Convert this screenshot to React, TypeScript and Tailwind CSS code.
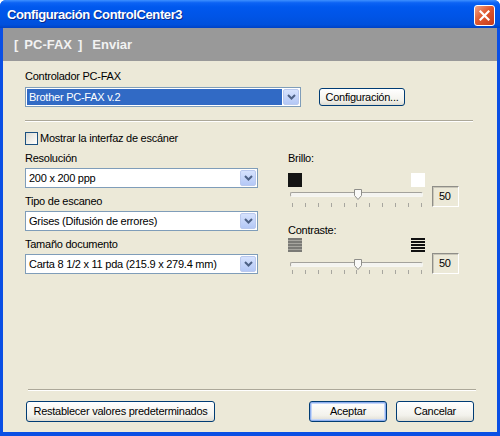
import { type ReactNode } from "react";

const font = "font-['Liberation_Sans',Arial,sans-serif]";

function Chevron() {
  return (
    <svg width="9" height="6" viewBox="0 0 9 6" className="block">
      <path d="M1 1 L4.5 4.5 L8 1" fill="none" stroke="#4D6185" strokeWidth="2" />
    </svg>
  );
}

interface ComboProps {
  value: string;
  className: string;
  selected?: boolean;
}

function Combo({ value, className, selected }: ComboProps) {
  return (
    <div className={`flex h-[20px] items-center border border-[#7F9DB9] bg-white ${className}`}>
      <div className="h-full flex-1 p-[1px]">
        <div
          className={
            selected
              ? "flex h-full items-center bg-[#316AC5] pl-[2px] text-white"
              : "flex h-full items-center pl-[2px] text-black"
          }
        >
          {value}
        </div>
      </div>
      <div className="mr-[1px] flex h-[16px] w-[16px] items-center justify-center rounded-[2px] border border-[#BAC9EE] bg-[linear-gradient(to_bottom,#D6E2FD,#B4C8F6)]">
        <Chevron />
      </div>
    </div>
  );
}

function XpButton({ children, className, isDefault }: { children: ReactNode; className: string; isDefault?: boolean }) {
  return (
    <div
      className={`flex items-center justify-center rounded-[3px] border border-[#003C74] bg-[linear-gradient(to_bottom,#FFFFFF,#F3F2EC_70%,#DEDCD2)] text-black ${
        isDefault ? "shadow-[inset_0_0_0_1px_#8EAEEE,inset_0_0_0_2px_#C4D6F8]" : ""
      } ${className}`}
    >
      {children}
    </div>
  );
}

function Slider({ trackTop, height, thumbTop }: { trackTop: string; height: string; thumbTop: string }) {
  const ticks = Array.from({ length: 11 }, (_, i) => i);
  return (
    <div className={`relative w-[137px] ${height}`}>
      <div
        className={`mx-[2px] h-[5px] rounded-[2px] border border-t-[#A3A29C] border-l-[#A3A29C] border-b-[#F6F6F2] border-r-[#F6F6F2] bg-[#F4F4F0] ${trackTop}`}
      />
      <svg width="8" height="11" viewBox="0 0 8 11" className={`absolute left-[66px] ${thumbTop}`}>
        <path d="M0.5 0.5 H7.5 V6.5 L4 10.5 L0.5 6.5 Z" fill="#FAFAF8" stroke="#8E8E8A" />
      </svg>
      <div className="absolute bottom-0 left-[4px] right-[3px] flex justify-between">
        {ticks.map((t) => (
          <div key={t} className="h-[4px] w-[1px] bg-[#A7A69F]" />
        ))}
      </div>
    </div>
  );
}

function ValueBox({ value }: { value: string }) {
  return (
    <div className="flex h-[21px] w-[27px] items-center border border-t-[#8F8E88] border-l-[#8F8E88] border-b-white border-r-white pl-[6px] shadow-[inset_1px_1px_0_#C9C6B8]">
      {value}
    </div>
  );
}

function Bars({ color, gap }: { color: string; gap: string }) {
  return (
    <div className={`flex h-[14px] w-[14px] flex-col justify-between ${gap}`}>
      {[0, 1, 2, 3, 4].map((i) => (
        <div key={i} className={`h-[2px] w-full ${color}`} />
      ))}
    </div>
  );
}

function Separator({ className }: { className: string }) {
  return <div className={`h-[2px] border-t border-t-[#ACA899] border-b border-b-white ${className}`} />;
}

export default function App() {
  return (
    <div className={`h-[436px] w-[500px] text-[11px] leading-[13px] tracking-[-0.25px] ${font}`}>
      <div className="flex h-full flex-col overflow-hidden rounded-t-[6px] bg-[#0A4FE4]">
        {/* title bar */}
        <div className="flex h-[28px] shrink-0 items-center justify-between bg-[linear-gradient(to_bottom,#3E90FF_0%,#0C63F4_10%,#0058EE_25%,#0054E6_60%,#0050DC_88%,#0042C4_100%)] pl-[7px] pr-[5px]">
          <span className="text-[13px] font-bold tracking-[-0.4px] text-white [text-shadow:1px_1px_0_#0A2A8A]">
            Configuración ControlCenter3
          </span>
          <div className="mt-[2px] flex h-[21px] w-[21px] items-center justify-center rounded-[3px] border border-white bg-[linear-gradient(135deg,#F0A58A,#E0592F_45%,#C53A1A)]">
            <svg width="11" height="11" viewBox="0 0 11 11">
              <path d="M1.5 1.5 L9.5 9.5 M9.5 1.5 L1.5 9.5" stroke="white" strokeWidth="2.2" strokeLinecap="square" />
            </svg>
          </div>
        </div>

        <div className="mx-[3px] mb-[4px] flex flex-1 flex-col">
          {/* header band */}
          <div className="flex h-[33px] shrink-0 items-center bg-[#999999] pl-[11px] text-[13px] font-bold tracking-normal text-[#F2F2F2]">
            <span>[</span>
            <span className="ml-[6px]">PC-FAX</span>
            <span className="ml-[6px]">]</span>
            <span className="ml-[10px]">Enviar</span>
          </div>

          {/* content */}
          <div className="flex flex-1 flex-col bg-[#ECE9D8] pl-[22px] pr-[23px] pt-[9px]">
            <div>Controlador PC-FAX</div>
            <div className="mt-[4px] flex items-center gap-[18px]">
              <Combo value="Brother PC-FAX v.2" className="w-[276px]" selected />
              <XpButton className="h-[18px] w-[86px]">Configuración...</XpButton>
            </div>

            <Separator className="mr-[1px] mt-[13px]" />

            <div className="mt-[10px] flex items-center gap-[2px]">
              <div className="h-[13px] w-[13px] border border-[#1C5180] bg-[linear-gradient(135deg,#DCDBD3,#F6F5F1_70%,#FFFFFF)]" />
              <span>Mostrar la interfaz de escáner</span>
            </div>

            <div className="mt-[7px] flex gap-[30px]">
              {/* left column */}
              <div className="flex w-[233px] flex-col">
                <div>Resolución</div>
                <Combo value="200 x 200 ppp" className="mt-[3px] w-[233px]" />
                <div className="mt-[7px]">Tipo de escaneo</div>
                <Combo value="Grises (Difusión de errores)" className="mt-[3px] w-[233px]" />
                <div className="mt-[7px]">Tamaño documento</div>
                <Combo value="Carta 8 1/2 x 11 pda (215.9 x 279.4 mm)" className="mt-[3px] w-[233px]" />
              </div>

              {/* right column */}
              <div className="flex flex-col">
                <div>Brillo:</div>
                <div className="mt-[8px] flex items-end gap-[7px]">
                  <div className="flex flex-col">
                    <div className="flex w-[137px] justify-between">
                      <div className="h-[14px] w-[14px] bg-[#141414]" />
                      <div className="h-[14px] w-[14px] bg-white" />
                    </div>
                    <Slider trackTop="mt-[5px]" height="h-[20px]" thumbTop="top-[2px]" />
                  </div>
                  <ValueBox value="50" />
                </div>

                <div className="mt-[17px]">Contraste:</div>
                <div className="mt-[1px] flex items-end gap-[7px]">
                  <div className="flex flex-col">
                    <div className="flex w-[137px] justify-between">
                      <Bars color="bg-[#7A7A76]" gap="bg-[#A6A59F]" />
                      <Bars color="bg-[#111111]" gap="" />
                    </div>
                    <Slider trackTop="mt-[10px]" height="h-[22px]" thumbTop="top-[7px]" />
                  </div>
                  <ValueBox value="50" />
                </div>
              </div>
            </div>

            {/* footer */}
            <div className="mt-auto pb-[10px]">
              <Separator className="ml-[3px] mr-[-2px]" />
              <div className="mt-[10px] flex items-center">
                <XpButton className="ml-[1px] h-[21px] w-[189px]">Restablecer valores predeterminados</XpButton>
                <XpButton className="ml-auto h-[21px] w-[78px]" isDefault>
                  Aceptar
                </XpButton>
                <XpButton className="ml-[9px] h-[21px] w-[78px]">Cancelar</XpButton>
              </div>
            </div>
          </div>
        </div>
      </div>
    </div>
  );
}
